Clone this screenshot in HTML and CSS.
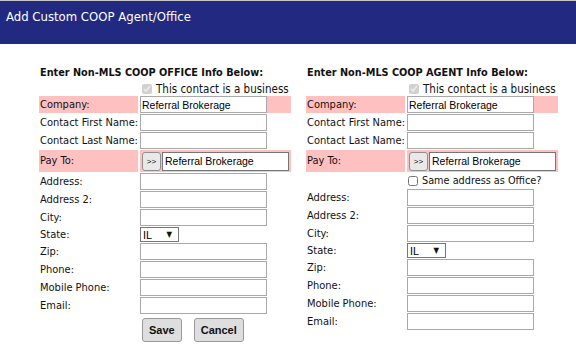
FILE: index.html
```html
<!DOCTYPE html>
<html lang="en">

<head>
    <meta charset="UTF-8">
    <meta name="viewport" content="width=device-width, initial-scale=1.0">
    <title>Add Custom COOP Agent/Office</title>
    <link rel="stylesheet" href="styles.css">
</head>

<body>

    <div class="header">
        <span class="title">Add Custom COOP Agent/Office</span>
    </div>

    <div class="panels">

        <!-- Office -->
        <form class="panel" id="form-office">
            <h3>Enter Non-MLS COOP OFFICE Info Below:</h3>
            <div class="check-row">
                <input type="checkbox" checked disabled>
                <span>This contact is a business</span>
            </div>
            <div class="grid">
                <label class="lbl pink">Company:</label>
                <div class="val pink"><input type="text" class="txt" value="Referral Brokerage"></div>

                <label class="lbl">Contact First Name:</label>
                <div class="val"><input type="text" class="txt"></div>

                <label class="lbl">Contact Last Name:</label>
                <div class="val"><input type="text" class="txt"></div>

                <label class="lbl pink payto">Pay To:</label>
                <div class="val pink payto">
                    <button type="button" class="mini">&gt;&gt;</button>
                    <input type="text" class="txt dark" value="Referral Brokerage">
                </div>

                <label class="lbl">Address:</label>
                <div class="val"><input type="text" class="txt"></div>

                <label class="lbl">Address 2:</label>
                <div class="val"><input type="text" class="txt"></div>

                <label class="lbl">City:</label>
                <div class="val"><input type="text" class="txt"></div>

                <label class="lbl state">State:</label>
                <div class="val state">
                    <span class="sel"><select><option>IL</option></select><i>&#9660;</i></span>
                </div>

                <label class="lbl">Zip:</label>
                <div class="val"><input type="text" class="txt"></div>

                <label class="lbl">Phone:</label>
                <div class="val"><input type="text" class="txt"></div>

                <label class="lbl">Mobile Phone:</label>
                <div class="val"><input type="text" class="txt"></div>

                <label class="lbl">Email:</label>
                <div class="val"><input type="text" class="txt"></div>

                <div></div>
                <div class="actions">
                    <button type="submit" class="btn">Save</button>
                    <button type="button" class="btn">Cancel</button>
                </div>
            </div>
        </form>

        <!-- Agent -->
        <form class="panel" id="form-agent">
            <h3>Enter Non-MLS COOP AGENT Info Below:</h3>
            <div class="check-row">
                <input type="checkbox" checked disabled>
                <span>This contact is a business</span>
            </div>
            <div class="grid">
                <label class="lbl pink">Company:</label>
                <div class="val pink"><input type="text" class="txt" value="Referral Brokerage"></div>

                <label class="lbl">Contact First Name:</label>
                <div class="val"><input type="text" class="txt"></div>

                <label class="lbl">Contact Last Name:</label>
                <div class="val"><input type="text" class="txt"></div>

                <label class="lbl pink payto">Pay To:</label>
                <div class="val pink payto">
                    <button type="button" class="mini">&gt;&gt;</button>
                    <input type="text" class="txt dark" value="Referral Brokerage">
                </div>

                <div></div>
                <div class="val same">
                    <input type="checkbox">
                    <span>Same address as Office?</span>
                </div>

                <label class="lbl">Address:</label>
                <div class="val"><input type="text" class="txt"></div>

                <label class="lbl">Address 2:</label>
                <div class="val"><input type="text" class="txt"></div>

                <label class="lbl">City:</label>
                <div class="val"><input type="text" class="txt"></div>

                <label class="lbl state">State:</label>
                <div class="val state">
                    <span class="sel"><select><option>IL</option></select><i>&#9660;</i></span>
                </div>

                <label class="lbl">Zip:</label>
                <div class="val"><input type="text" class="txt"></div>

                <label class="lbl">Phone:</label>
                <div class="val"><input type="text" class="txt"></div>

                <label class="lbl">Mobile Phone:</label>
                <div class="val"><input type="text" class="txt"></div>

                <label class="lbl">Email:</label>
                <div class="val"><input type="text" class="txt"></div>
            </div>
        </form>

    </div>

</body>

</html>
```

FILE: styles.css
```css
body {
    font-family: "DejaVu Sans Condensed", "DejaVu Sans", sans-serif;
    margin: 0;
    padding: 0;
    background-color: #fff;
    color: #111;
}

/* Barra de titulo */
.header {
    background-color: #212a80;
    border-top: 1px solid #c8c8c8;
    height: 44px;
    padding: 5px 6px 0 6px;
    box-sizing: border-box;
}

.header .title {
    color: #fff;
    font-size: 13px;
}

.panels {
    display: flex;
    gap: 15px;
    padding: 22px 0 0 39px;
}

.panel {
    width: 252px;
    margin: 0;
}

.panel h3 {
    font-size: 10.8px;
    font-weight: bold;
    margin: 0 0 0 1px;
    height: 16px;
    line-height: 14px;
}

.check-row {
    display: flex;
    align-items: center;
    height: 13px;
    padding-left: 103px;
    font-size: 11.5px;
    margin-bottom: 1px;
}

input[type="checkbox"] {
    width: 10px;
    height: 10px;
    margin: 0 4px 0 0;
}

.grid {
    display: grid;
    grid-template-columns: 99px 151px;
    column-gap: 2px;
    row-gap: 1px;
}

.lbl {
    font-size: 11px;
    padding-left: 1px;
    height: 17px;
    line-height: 17px;
    white-space: nowrap;
}

.val {
    height: 17px;
    display: flex;
    align-items: center;
}

.pink {
    background-color: #ffc0c0;
}

.payto {
    height: 22px;
    line-height: 22px;
}

.payto.val {
    padding-left: 2px;
    gap: 1px;
}

.state {
    height: 15px;
    line-height: 15px;
}

.txt {
    width: 127px;
    height: 17px;
    box-sizing: border-box;
    border: 1px solid #a9a9a9;
    padding: 0 1px;
    margin: 0;
    font-family: "Liberation Sans", Arial, sans-serif;
    font-size: 10.5px;
    color: #000;
    background: #fff;
}

.txt.dark {
    height: 19px;
    border-color: #767676;
    padding: 0 2px;
}

.mini {
    width: 19px;
    height: 19px;
    padding: 0;
    border: 1px solid #8f8f8f;
    border-radius: 3px;
    background-color: #e9e9e9;
    font-family: "Liberation Sans", Arial, sans-serif;
    font-size: 8px;
    color: #000;
}

.sel {
    position: relative;
    display: inline-block;
}

.sel select {
    -webkit-appearance: none;
    appearance: none;
    width: 39px;
    height: 15px;
    border: 1px solid #767676;
    border-radius: 0;
    background: #fff;
    padding: 0 0 0 2px;
    font-family: "Liberation Sans", Arial, sans-serif;
    font-size: 11px;
    color: #000;
    display: block;
}

.sel i {
    position: absolute;
    right: 7px;
    top: 0;
    font-style: normal;
    font-size: 8px;
    line-height: 15px;
    pointer-events: none;
}

.same {
    height: 15px;
    font-size: 10.8px;
    padding-left: 1px;
}

.actions {
    display: flex;
    gap: 12px;
    padding: 3px 0 0 2px;
}

.btn {
    height: 24px;
    padding: 0 6px;
    border: 1px solid #999;
    border-radius: 3px;
    background-color: #dedede;
    font-family: "Liberation Sans", Arial, sans-serif;
    font-weight: bold;
    font-size: 11px;
    color: #111;
    cursor: pointer;
}
```
